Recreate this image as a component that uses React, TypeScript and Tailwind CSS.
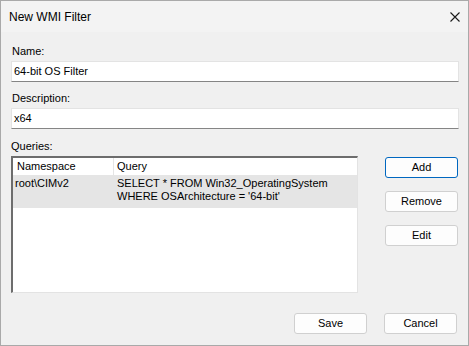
import React from "react";

function Btn({ label, focused }: { label: string; focused?: boolean }) {
  return (
    <div
      className={
        "w-[73px] h-[21px] flex items-center justify-center rounded-[3px] bg-[#fdfdfd] text-[11px] text-black " +
        (focused ? "border border-[#0067c0]" : "border border-[#d0d0d0]")
      }
    >
      {label}
    </div>
  );
}

export default function App() {
  return (
    <div
      className="w-[469px] h-[346px] bg-[#f0f0f0] border border-[#a9a9a9] flex flex-col text-[11px] text-black"
      style={{ fontFamily: '"Liberation Sans", Arial, sans-serif' }}
    >
      <div className="h-[31px] bg-[#f3f3f3] flex items-center justify-between pl-[8px] pr-[8px] shrink-0">
        <span className="text-[12px] pt-[1px]">New WMI Filter</span>
        <svg width="10" height="10" viewBox="0 0 10 10">
          <path d="M0.5 0.5 L9.5 9.5 M9.5 0.5 L0.5 9.5" stroke="#1a1a1a" strokeWidth="1.1" />
        </svg>
      </div>
      <div className="flex flex-col px-[10px] pt-[12px]">
        <div className="leading-[14px] pl-[1px]">Name:</div>
        <div className="mt-[3px] h-[21px] w-[448px] bg-white border border-[#e3e3e3] border-b-[#858585] flex items-center pl-[2px]">
          64-bit OS Filter
        </div>
        <div className="mt-[9px] leading-[14px] pl-[1px]">Description:</div>
        <div className="mt-[3px] h-[21px] w-[448px] bg-white border border-[#e3e3e3] border-b-[#858585] flex items-center pl-[2px]">
          x64
        </div>
        <div className="mt-[10px] leading-[14px]">Queries:</div>
        <div className="flex mt-[3px]">
          <div className="w-[347px] h-[137px] bg-white border-l-2 border-t-2 border-[#6d6d6d] border-r border-b border-r-[#e3e3e3] border-b-[#e3e3e3] flex flex-col">
            <div className="h-[18px] flex border-b border-[#e5e5e5] shrink-0">
              <div className="w-[101px] pl-[4px] flex items-center border-r border-[#e5e5e5]">Namespace</div>
              <div className="pl-[3px] flex items-center">Query</div>
            </div>
            <div className="h-[32px] bg-[#e5e5e5] flex">
              <div className="w-[101px] pl-[2px] pt-[1px] leading-[13px]">root\CIMv2</div>
              <div className="pl-[3px] pt-[1px] leading-[13px]">
                SELECT * FROM Win32_OperatingSystem
                <br />
                WHERE OSArchitecture = '64-bit'
              </div>
            </div>
          </div>
          <div className="flex flex-col ml-[27px] mt-[1px] gap-[13px]">
            <Btn label="Add" focused />
            <Btn label="Remove" />
            <Btn label="Edit" />
          </div>
        </div>
        <div className="flex justify-end gap-[17px] mt-[20px] pr-[1px]">
          <Btn label="Save" />
          <Btn label="Cancel" />
        </div>
      </div>
    </div>
  );
}
